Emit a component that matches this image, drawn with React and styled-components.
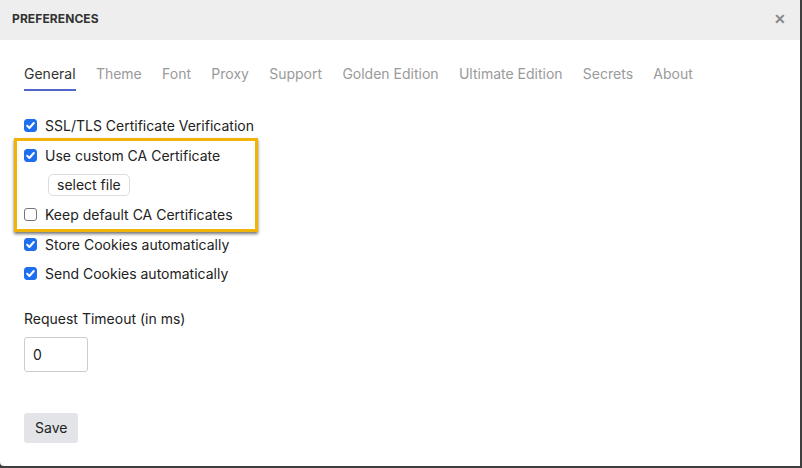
import React from 'react'
import styled, { createGlobalStyle } from 'styled-components'

const Global = createGlobalStyle`
    body {
        margin: 0;
        background: #3f3f3f;
        font-family: Inter, "Noto Sans", sans-serif;
    }
`

const tabs = [
    'General',
    'Theme',
    'Font',
    'Proxy',
    'Support',
    'Golden Edition',
    'Ultimate Edition',
    'Secrets',
    'About',
]

const Check = ({ checked }) => (
    <Box checked={checked}>
        {checked && (
            <svg width="11" height="11" viewBox="0 0 11 11">
                <path
                    d="M2.2 5.8 L4.4 8 L8.8 3"
                    fill="none"
                    stroke="#fff"
                    strokeWidth="2"
                    strokeLinecap="round"
                    strokeLinejoin="round"
                />
            </svg>
        )}
    </Box>
)

const CheckRow = ({ checked, children }) => (
    <Row>
        <Check checked={checked} />
        <span>{children}</span>
    </Row>
)

const App = () => {
    return (
        <>
            <Global />
            <Modal>
                <Header>
                    <Title>PREFERENCES</Title>
                    <Close>✕</Close>
                </Header>
                <Body>
                    <Tabs>
                        {tabs.map((t, i) => (
                            <Tab key={t} active={i === 0}>
                                {t}
                            </Tab>
                        ))}
                    </Tabs>
                    <Section>
                        <CheckRow checked>SSL/TLS Certificate Verification</CheckRow>
                        <Group>
                            <CheckRow checked>Use custom CA Certificate</CheckRow>
                            <Row>
                                <FileButton>select file</FileButton>
                            </Row>
                            <CheckRow>Keep default CA Certificates</CheckRow>
                            <Highlight />
                        </Group>
                        <CheckRow checked>Store Cookies automatically</CheckRow>
                        <CheckRow checked>Send Cookies automatically</CheckRow>
                    </Section>
                    <Label>Request Timeout (in ms)</Label>
                    <Input defaultValue="0" />
                    <SaveButton>Save</SaveButton>
                </Body>
            </Modal>
        </>
    )
}

const Modal = styled.div`
    width: 800px;
    height: 466px;
    background: #fff;
    border-bottom-left-radius: 4px;
    overflow: hidden;
`
const Header = styled.div`
    height: 40px;
    box-sizing: border-box;
    padding: 0 14px 3px 12px;
    background: #eeeeee;
    display: flex;
    align-items: center;
    justify-content: space-between;
`
const Title = styled.div`
    font-size: 12px;
    font-weight: 700;
    color: #333;
    letter-spacing: 0.1px;
`
const Close = styled.div`
    font-size: 14px;
    font-weight: 700;
    color: #888;
`
const Body = styled.div`
    padding: 0 24px;
    display: flex;
    flex-direction: column;
    align-items: flex-start;
`
const Tabs = styled.div`
    display: flex;
    gap: 20.3px;
    margin-top: 24px;
`
const Tab = styled.div`
    font-size: 14px;
    line-height: 20px;
    padding-bottom: 5px;
    color: ${(p) => (p.active ? '#333' : '#9a9a9a')};
    border-bottom: 2px solid ${(p) => (p.active ? '#5068c8' : 'transparent')};
`
const Section = styled.div`
    margin-top: 20px;
    display: flex;
    flex-direction: column;
`
const Group = styled.div`
    position: relative;
    display: flex;
    flex-direction: column;
`
const Row = styled.label`
    height: 29.6px;
    display: flex;
    align-items: center;
    gap: 8px;
    font-size: 14px;
    color: #222;
`
const Box = styled.span`
    width: 13px;
    height: 13px;
    box-sizing: border-box;
    border-radius: 3px;
    display: flex;
    align-items: center;
    justify-content: center;
    background: ${(p) => (p.checked ? '#1e6ff0' : '#fff')};
    border: 1px solid ${(p) => (p.checked ? '#1e6ff0' : '#767676')};
`
const FileButton = styled.button`
    margin-left: 24px;
    height: 22px;
    padding: 0 8px;
    background: #fff;
    border: 1px solid #ddd;
    border-radius: 5px;
    font-family: Inter, "Noto Sans", sans-serif;
    font-size: 14px;
    color: #222;
`
const Highlight = styled.div`
    position: absolute;
    left: -10px;
    top: -3px;
    width: 244px;
    height: 94px;
    box-sizing: border-box;
    border: 3px solid #f0b308;
    box-shadow: 0 2px 3px rgba(0, 0, 0, 0.55);
    pointer-events: none;
`
const Label = styled.div`
    margin-top: 20px;
    font-size: 14px;
    line-height: 20px;
    color: #222;
`
const Input = styled.input`
    margin-top: 8px;
    width: 64px;
    height: 35px;
    box-sizing: border-box;
    border: 1px solid #ccc;
    border-radius: 3px;
    padding: 0 8px;
    font-family: Inter, "Noto Sans", sans-serif;
    font-size: 14px;
    color: #222;
    outline: none;
`
const SaveButton = styled.button`
    margin-top: 41px;
    height: 30px;
    padding: 0 11px;
    background: #e2e4e8;
    border: none;
    border-radius: 3px;
    font-family: Inter, "Noto Sans", sans-serif;
    font-size: 14px;
    color: #222;
`

export default App
